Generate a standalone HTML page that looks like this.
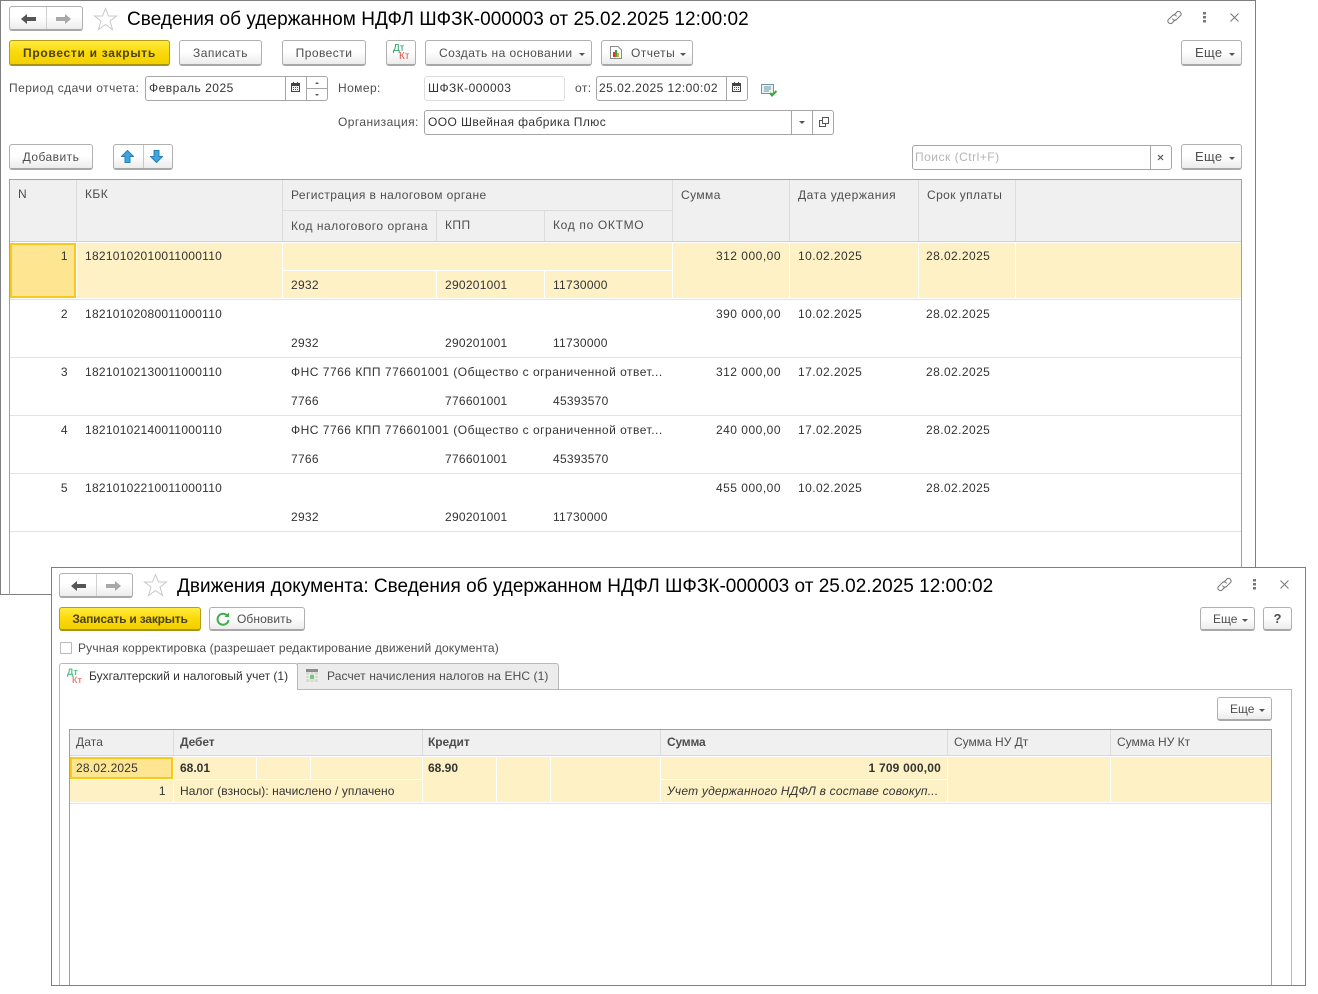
<!DOCTYPE html>
<html lang="ru">
<head>
<meta charset="utf-8">
<style>
html,body{margin:0;padding:0;background:#fff}
#root{position:relative;width:1318px;height:994px;overflow:hidden;background:#fff;font-family:"Liberation Sans",Arial,sans-serif;font-size:12px;color:#333}
#root div,#root svg{position:absolute}
.t{white-space:nowrap;line-height:14px;letter-spacing:.42px;color:#333}
.n{letter-spacing:.27px}
.d{letter-spacing:.42px}
.m{letter-spacing:.5px}
.b{white-space:nowrap;line-height:14px;color:#333;letter-spacing:0}
.r{text-align:right}
.l{color:#4d4d4d}
.win{background:#fff;border:1px solid #7f7f7f;box-sizing:border-box}
.btn{box-sizing:border-box;border:1px solid #b0b0b0;border-bottom:2px solid #a8a8a8;border-radius:3px;background:linear-gradient(#fff,#fff 45%,#ececec);line-height:22px;text-align:center;color:#4d4d4d;letter-spacing:.45px;white-space:nowrap}
.y{border:1px solid #b39b1c;border-bottom:2px solid #a89218;background:linear-gradient(#ffec3f,#fbd90a 50%,#f2d000);color:#4a4218;font-weight:bold}
.fld{box-sizing:border-box;border:1px solid #a6a6a6;border-radius:3px;background:#fff}
.title{font-size:19px;line-height:22px;color:#000;white-space:nowrap;letter-spacing:.05px}
.h{background:#f0f0f0}
.s{background:#fdf1c5}
.line{background:#e3e3e3}
.tri{width:0;height:0;border-left:3px solid transparent;border-right:3px solid transparent;border-top:3px solid #555}
.dk{font-size:10px;line-height:10px;letter-spacing:0;white-space:nowrap}
</style>
</head>
<body>
<div id="root">

<!-- TOP WINDOW -->
<div class="win" style="left:0;top:0;width:1256px;height:595px"></div>

<div class="btn" style="left:9px;top:6px;width:74px;height:25px"></div>
<div style="left:46px;top:7px;width:1px;height:22px;background:#d0d0d0"></div>
<svg style="left:21px;top:13px" width="15" height="12" viewBox="0 0 15 12"><path d="M0 6 6 1V4H15V8H6V11Z" fill="#555"/></svg>
<svg style="left:56px;top:13px" width="15" height="12" viewBox="0 0 15 12"><path d="M15 6 9 1V4H0V8H9V11Z" fill="#a8a8a8"/></svg>
<svg style="left:93px;top:7px" width="25" height="24" viewBox="0 0 25 24"><path d="M12.500 1.500 15.500 9H23.500L17 14 19.500 22.500 12.500 17.500 5.500 22.500 8 14 1.500 9H9.500Z" fill="#fff" stroke="#c8c8c8"/></svg>
<div class="title" style="left:127px;top:9px">Сведения об удержанном НДФЛ ШФЗК-000003 от 25.02.2025 12:00:02</div>
<svg style="left:1166px;top:9px" width="17" height="17" viewBox="0 0 17 17" fill="none" stroke="#777"><path d="M7.500 6.500 11.500 2.500A2.800 2.800 0 0 1 15 6L10 11A2.500 2.500 0 0 1 6.500 9.500"/><path d="M9.500 10.500 5.500 14.500A2.800 2.800 0 0 1 2 11L7 6A2.500 2.500 0 0 1 10.500 7.500"/></svg>
<svg style="left:1202px;top:11px" width="5" height="13" viewBox="0 0 5 13" fill="#777"><rect x="1" y="1" width="3" height="2.500"/><rect x="1" y="5" width="3" height="2.500"/><rect x="1" y="9" width="3" height="2.500"/></svg>
<svg style="left:1230px;top:13px" width="9" height="9" viewBox="0 0 9 9" stroke="#777"><path d="M.5.5 8.500 8.500M8.500.5.500 8.500"/></svg>

<div class="btn y" style="left:9px;top:40px;width:161px;height:26px;line-height:24px;letter-spacing:.7px">Провести и закрыть</div>
<div class="btn" style="left:179px;top:40px;width:83px;height:26px;line-height:24px">Записать</div>
<div class="btn" style="left:282px;top:40px;width:84px;height:26px;line-height:24px">Провести</div>
<div class="btn" style="left:386px;top:40px;width:30px;height:26px"></div>
<div class="dk" style="left:393px;top:44px;color:#1f9a5a">Дт</div>
<div class="dk" style="left:399px;top:52px;color:#e0504a">Кт</div>
<div class="btn" style="left:425px;top:40px;width:167px;height:26px;line-height:24px;text-align:left;padding-left:13px">Создать на основании</div>
<div class="tri" style="left:579px;top:53px"></div>
<div class="btn" style="left:601px;top:40px;width:92px;height:26px;line-height:24px;text-align:left;padding-left:29px">Отчеты</div>
<svg style="left:610px;top:46px" width="12" height="13" viewBox="0 0 12 13"><path d="M.5.500H8L11.500 4V12.500H.5Z" fill="#fff" stroke="#8a8a8a"/><rect x="3" y="6" width="2" height="5" fill="#d33"/><rect x="5" y="4" width="2" height="7" fill="#3a3"/><rect x="7" y="7" width="2" height="4" fill="#da3"/></svg>
<div class="tri" style="left:680px;top:53px"></div>
<div class="btn" style="left:1181px;top:40px;width:61px;height:26px;line-height:24px;text-align:left;padding-left:13px;font-size:13px;letter-spacing:.3px">Еще</div>
<div class="tri" style="left:1229px;top:53px"></div>

<div class="t l" style="left:9px;top:81px;letter-spacing:.47px">Период сдачи отчета:</div>
<div class="fld" style="left:145px;top:76px;width:183px;height:25px"></div>
<div style="left:285px;top:77px;width:1px;height:23px;background:#a6a6a6"></div>
<div style="left:306px;top:77px;width:1px;height:23px;background:#a6a6a6"></div>
<div style="left:307px;top:88px;width:20px;height:1px;background:#a6a6a6"></div>
<div class="t" style="left:149px;top:81px;letter-spacing:.5px">Февраль 2025</div>
<svg style="left:291px;top:82px" width="9" height="10" viewBox="0 0 9 10"><path d="M0 1H2V0H3V1H6V0H7V1H9V10H0Z" fill="#444"/><rect x="1" y="4" width="7" height="5" fill="#f2f2f2"/><path d="M2 5.500H7M2 7.500H7" stroke="#555" stroke-dasharray="1 1"/></svg>
<div class="tri" style="left:315px;top:82px;border-top:0;border-bottom:2px solid #555;border-left-width:2px;border-right-width:2px"></div>
<div class="tri" style="left:315px;top:94px;border-top:2px solid #555;border-left-width:2px;border-right-width:2px"></div>

<div class="t l" style="left:338px;top:81px">Номер:</div>
<div class="fld" style="left:424px;top:76px;width:141px;height:25px;border-color:#ddd"></div>
<div class="t" style="left:428px;top:81px;letter-spacing:.45px">ШФЗК-000003</div>
<div class="t l" style="left:575px;top:81px">от:</div>
<div class="fld" style="left:596px;top:76px;width:152px;height:25px"></div>
<div style="left:726px;top:77px;width:1px;height:23px;background:#a6a6a6"></div>
<div class="t" style="left:599px;top:81px;letter-spacing:.47px">25.02.2025 12:00:02</div>
<svg style="left:732px;top:82px" width="9" height="10" viewBox="0 0 9 10"><path d="M0 1H2V0H3V1H6V0H7V1H9V10H0Z" fill="#444"/><rect x="1" y="4" width="7" height="5" fill="#f2f2f2"/><path d="M2 5.500H7M2 7.500H7" stroke="#555" stroke-dasharray="1 1"/></svg>
<svg style="left:761px;top:84px" width="17" height="13" viewBox="0 0 17 13"><path d="M.5.500H12.500V9.500H.5Z" fill="#e8f0f2" stroke="#6d98a6"/><path d="M3 3H10M3 5H10M3 7H8" stroke="#6d98a6"/><path d="M9 9 11 11.500 15.500 7" fill="none" stroke="#3aa83a" stroke-width="2"/></svg>

<div class="t l" style="left:338px;top:115px">Организация:</div>
<div class="fld" style="left:424px;top:110px;width:410px;height:25px"></div>
<div style="left:791px;top:111px;width:1px;height:23px;background:#a6a6a6"></div>
<div style="left:812px;top:111px;width:1px;height:23px;background:#a6a6a6"></div>
<div class="t" style="left:428px;top:115px">ООО Швейная фабрика Плюс</div>
<div class="tri" style="left:799px;top:121px"></div>
<svg style="left:819px;top:117px" width="10" height="10" viewBox="0 0 10 10" fill="#fff" stroke="#555"><rect x="3.500" y=".5" width="6" height="6"/><path d="M3 3.500H.5V9.500H6.500V7" fill="none"/></svg>

<div class="btn" style="left:9px;top:144px;width:84px;height:26px;line-height:24px">Добавить</div>
<div class="btn" style="left:113px;top:144px;width:60px;height:26px"></div>
<div style="left:143px;top:145px;width:1px;height:23px;background:#c8c8c8"></div>
<svg style="left:121px;top:150px" width="13" height="13" viewBox="0 0 13 13"><path d="M6.500.5 12.500 6.500H9V12.500H4V6.500H.5Z" fill="#3fa5e0" stroke="#2a7fb5"/></svg>
<svg style="left:150px;top:150px" width="13" height="13" viewBox="0 0 13 13"><path d="M6.500 12.500 12.500 6.500H9V.5H4V6.500H.5Z" fill="#3fa5e0" stroke="#2a7fb5"/></svg>
<div class="fld" style="left:912px;top:145px;width:260px;height:25px"></div>
<div style="left:1150px;top:146px;width:1px;height:23px;background:#a6a6a6"></div>
<div class="t" style="left:915px;top:150px;color:#b5b5b5;letter-spacing:.5px">Поиск (Ctrl+F)</div>
<svg style="left:1157px;top:154px" width="7" height="7" viewBox="0 0 7 7" stroke="#555" stroke-width="1.200"><path d="M1 1 6 6M6 1 1 6"/></svg>
<div class="btn" style="left:1181px;top:144px;width:61px;height:26px;line-height:24px;text-align:left;padding-left:13px;font-size:13px;letter-spacing:.3px">Еще</div>
<div class="tri" style="left:1229px;top:157px"></div>

<!-- TOP TABLE -->
<div style="left:9px;top:179px;width:1233px;height:1px;background:#a0a0a0"></div>
<div style="left:9px;top:179px;width:1px;height:416px;background:#a0a0a0"></div>
<div style="left:1241px;top:179px;width:1px;height:416px;background:#a0a0a0"></div>
<div class="h" style="left:10px;top:180px;width:1231px;height:61px"></div>
<div style="left:10px;top:241px;width:1231px;height:1px;background:#d0d0d0"></div>
<div style="left:283px;top:210px;width:389px;height:1px;background:#dcdcdc"></div>
<div style="left:76px;top:180px;width:1px;height:61px;background:#dcdcdc"></div>
<div style="left:282px;top:180px;width:1px;height:61px;background:#dcdcdc"></div>
<div style="left:672px;top:180px;width:1px;height:61px;background:#dcdcdc"></div>
<div style="left:789px;top:180px;width:1px;height:61px;background:#dcdcdc"></div>
<div style="left:918px;top:180px;width:1px;height:61px;background:#dcdcdc"></div>
<div style="left:1015px;top:180px;width:1px;height:61px;background:#dcdcdc"></div>
<div style="left:436px;top:211px;width:1px;height:30px;background:#dcdcdc"></div>
<div style="left:544px;top:211px;width:1px;height:30px;background:#dcdcdc"></div>
<div class="t l" style="left:18px;top:187px">N</div>
<div class="t l" style="left:85px;top:187px">КБК</div>
<div class="t l" style="left:291px;top:188px">Регистрация в налоговом органе</div>
<div class="t l" style="left:291px;top:219px;letter-spacing:.52px">Код налогового органа</div>
<div class="t l" style="left:445px;top:218px">КПП</div>
<div class="t l" style="left:553px;top:218px;letter-spacing:.67px">Код по ОКТМО</div>
<div class="t l" style="left:681px;top:188px">Сумма</div>
<div class="t l" style="left:798px;top:188px;letter-spacing:.56px">Дата удержания</div>
<div class="t l" style="left:927px;top:188px">Срок уплаты</div>

<!-- selected row -->
<div class="s" style="left:10px;top:243px;width:1231px;height:55px"></div>
<div style="left:76px;top:243px;width:1px;height:55px;background:#fff"></div>
<div style="left:282px;top:243px;width:1px;height:55px;background:#fff"></div>
<div style="left:672px;top:243px;width:1px;height:55px;background:#fff"></div>
<div style="left:789px;top:243px;width:1px;height:55px;background:#fff"></div>
<div style="left:918px;top:243px;width:1px;height:55px;background:#fff"></div>
<div style="left:1015px;top:243px;width:1px;height:55px;background:#fff"></div>
<div style="left:283px;top:270px;width:389px;height:1px;background:#fff"></div>
<div style="left:436px;top:271px;width:1px;height:27px;background:#fff"></div>
<div style="left:544px;top:271px;width:1px;height:27px;background:#fff"></div>
<div style="left:10px;top:243px;width:66px;height:55px;box-sizing:border-box;border:2px solid #f8c91c;background:#fee591"></div>
<div style="left:10px;top:299px;width:1231px;height:1px;background:#e3e3e3"></div>
<div class="line" style="left:10px;top:357px;width:1231px;height:1px"></div>
<div class="line" style="left:10px;top:415px;width:1231px;height:1px"></div>
<div class="line" style="left:10px;top:473px;width:1231px;height:1px"></div>
<div class="line" style="left:10px;top:531px;width:1231px;height:1px"></div>

<div class="t r" style="left:30px;width:38px;top:249px">1</div>
<div class="t n" style="left:85px;top:249px">18210102010011000110</div>
<div class="t r m" style="left:690px;width:91px;top:249px">312 000,00</div>
<div class="t d" style="left:798px;top:249px">10.02.2025</div>
<div class="t d" style="left:926px;top:249px">28.02.2025</div>
<div class="t n" style="left:291px;top:278px">2932</div>
<div class="t n" style="left:445px;top:278px">290201001</div>
<div class="t n" style="left:553px;top:278px">11730000</div>

<div class="t r" style="left:30px;width:38px;top:307px">2</div>
<div class="t n" style="left:85px;top:307px">18210102080011000110</div>
<div class="t r m" style="left:690px;width:91px;top:307px">390 000,00</div>
<div class="t d" style="left:798px;top:307px">10.02.2025</div>
<div class="t d" style="left:926px;top:307px">28.02.2025</div>
<div class="t n" style="left:291px;top:336px">2932</div>
<div class="t n" style="left:445px;top:336px">290201001</div>
<div class="t n" style="left:553px;top:336px">11730000</div>

<div class="t r" style="left:30px;width:38px;top:365px">3</div>
<div class="t n" style="left:85px;top:365px">18210102130011000110</div>
<div class="t" style="left:291px;top:365px;letter-spacing:.5px;width:375px;overflow:hidden">ФНС 7766 КПП 776601001 (Общество с ограниченной ответ...</div>
<div class="t r m" style="left:690px;width:91px;top:365px">312 000,00</div>
<div class="t d" style="left:798px;top:365px">17.02.2025</div>
<div class="t d" style="left:926px;top:365px">28.02.2025</div>
<div class="t n" style="left:291px;top:394px">7766</div>
<div class="t n" style="left:445px;top:394px">776601001</div>
<div class="t n" style="left:553px;top:394px">45393570</div>

<div class="t r" style="left:30px;width:38px;top:423px">4</div>
<div class="t n" style="left:85px;top:423px">18210102140011000110</div>
<div class="t" style="left:291px;top:423px;letter-spacing:.5px;width:375px;overflow:hidden">ФНС 7766 КПП 776601001 (Общество с ограниченной ответ...</div>
<div class="t r m" style="left:690px;width:91px;top:423px">240 000,00</div>
<div class="t d" style="left:798px;top:423px">17.02.2025</div>
<div class="t d" style="left:926px;top:423px">28.02.2025</div>
<div class="t n" style="left:291px;top:452px">7766</div>
<div class="t n" style="left:445px;top:452px">776601001</div>
<div class="t n" style="left:553px;top:452px">45393570</div>

<div class="t r" style="left:30px;width:38px;top:481px">5</div>
<div class="t n" style="left:85px;top:481px">18210102210011000110</div>
<div class="t r m" style="left:690px;width:91px;top:481px">455 000,00</div>
<div class="t d" style="left:798px;top:481px">10.02.2025</div>
<div class="t d" style="left:926px;top:481px">28.02.2025</div>
<div class="t n" style="left:291px;top:510px">2932</div>
<div class="t n" style="left:445px;top:510px">290201001</div>
<div class="t n" style="left:553px;top:510px">11730000</div>

<!-- BOTTOM WINDOW -->
<div class="win" style="left:51px;top:567px;width:1255px;height:419px"></div>
<div class="btn" style="left:59px;top:573px;width:74px;height:25px"></div>
<div style="left:96px;top:574px;width:1px;height:22px;background:#d0d0d0"></div>
<svg style="left:71px;top:580px" width="15" height="12" viewBox="0 0 15 12"><path d="M0 6 6 1V4H15V8H6V11Z" fill="#555"/></svg>
<svg style="left:106px;top:580px" width="15" height="12" viewBox="0 0 15 12"><path d="M15 6 9 1V4H0V8H9V11Z" fill="#a8a8a8"/></svg>
<svg style="left:143px;top:573px" width="25" height="24" viewBox="0 0 25 24"><path d="M12.500 1.500 15.500 9H23.500L17 14 19.500 22.500 12.500 17.500 5.500 22.500 8 14 1.500 9H9.500Z" fill="#fff" stroke="#c8c8c8"/></svg>
<div class="title" style="left:177px;top:576px;letter-spacing:.01px">Движения документа: Сведения об удержанном НДФЛ ШФЗК-000003 от 25.02.2025 12:00:02</div>
<svg style="left:1216px;top:576px" width="17" height="17" viewBox="0 0 17 17" fill="none" stroke="#777"><path d="M7.500 6.500 11.500 2.500A2.800 2.800 0 0 1 15 6L10 11A2.500 2.500 0 0 1 6.500 9.500"/><path d="M9.500 10.500 5.500 14.500A2.800 2.800 0 0 1 2 11L7 6A2.500 2.500 0 0 1 10.500 7.500"/></svg>
<svg style="left:1252px;top:578px" width="5" height="13" viewBox="0 0 5 13" fill="#777"><rect x="1" y="1" width="3" height="2.500"/><rect x="1" y="5" width="3" height="2.500"/><rect x="1" y="9" width="3" height="2.500"/></svg>
<svg style="left:1280px;top:580px" width="9" height="9" viewBox="0 0 9 9" stroke="#777"><path d="M.5.5 8.500 8.500M8.500.5.500 8.500"/></svg>

<div class="btn y" style="left:59px;top:607px;width:142px;height:24px;letter-spacing:-.2px;line-height:22px">Записать и закрыть</div>
<div class="btn" style="left:209px;top:607px;width:96px;height:24px;text-align:left;padding-left:27px;letter-spacing:.1px">Обновить</div>
<svg style="left:216px;top:612px" width="14" height="14" viewBox="0 0 14 14" fill="none"><path d="M11.500 4A5.500 5.500 0 1 0 12.500 8" stroke="#3fae49" stroke-width="2"/><path d="M8.500 5H13V.5Z" fill="#3fae49"/></svg>
<div class="btn" style="left:1200px;top:607px;width:55px;height:24px;text-align:left;padding-left:12px;letter-spacing:0">Еще</div>
<div class="tri" style="left:1242px;top:619px"></div>
<div class="btn" style="left:1263px;top:607px;width:29px;height:24px;font-weight:bold;font-size:13px;letter-spacing:0">?</div>

<div class="fld" style="left:60px;top:642px;width:12px;height:12px;border-radius:1px;border-color:#b8b8b8"></div>
<div class="t l" style="left:78px;top:641px;letter-spacing:.16px">Ручная корректировка (разрешает редактирование движений документа)</div>

<!-- tabs -->
<div style="left:297px;top:689px;width:995px;height:1px;background:#b8b8b8"></div>
<div style="left:1291px;top:689px;width:1px;height:296px;background:#b8b8b8"></div>
<div style="left:59px;top:689px;width:1px;height:296px;background:#b8b8b8"></div>
<div style="left:297px;top:663px;width:262px;height:26px;box-sizing:border-box;border:1px solid #b8b8b8;border-bottom:0;border-radius:0 3px 0 0;background:#ececec"></div>
<div style="left:59px;top:663px;width:239px;height:27px;box-sizing:border-box;border:1px solid #b8b8b8;border-bottom:0;border-right:1px solid #b8b8b8;border-radius:3px 3px 0 0;background:#fff"></div>
<div class="dk" style="left:67px;top:667px;color:#57c08a;font-size:9px;font-weight:bold">Дт</div>
<div class="dk" style="left:72px;top:675px;color:#f08080;font-size:9px;font-weight:bold">Кт</div>
<div class="t" style="left:89px;top:669px;letter-spacing:0">Бухгалтерский и налоговый учет (1)</div>
<svg style="left:306px;top:669px" width="12" height="13" viewBox="0 0 12 13"><rect width="12" height="13" fill="#d4dcd0"/><rect width="12" height="3" fill="#8c8c8c"/><path d="M0 6.500H12M0 9.500H12M4 3V13M8 3V13" stroke="#f0f0f0"/><rect x="4" y="6" width="4" height="4" fill="#7cc47c"/></svg>
<div class="t l" style="left:327px;top:669px;letter-spacing:.1px">Расчет начисления налогов на ЕНС (1)</div>

<div class="btn" style="left:1217px;top:697px;width:55px;height:24px;text-align:left;padding-left:12px;letter-spacing:0">Еще</div>
<div class="tri" style="left:1259px;top:709px"></div>

<!-- BOTTOM TABLE -->
<div style="left:69px;top:729px;width:1203px;height:1px;background:#a0a0a0"></div>
<div style="left:69px;top:729px;width:1px;height:256px;background:#a0a0a0"></div>
<div style="left:1271px;top:729px;width:1px;height:256px;background:#a0a0a0"></div>
<div class="h" style="left:70px;top:730px;width:1201px;height:25px"></div>
<div style="left:70px;top:755px;width:1201px;height:1px;background:#d8d8d8"></div>
<div style="left:173px;top:730px;width:1px;height:25px;background:#dcdcdc"></div>
<div style="left:422px;top:730px;width:1px;height:25px;background:#dcdcdc"></div>
<div style="left:660px;top:730px;width:1px;height:25px;background:#dcdcdc"></div>
<div style="left:947px;top:730px;width:1px;height:25px;background:#dcdcdc"></div>
<div style="left:1110px;top:730px;width:1px;height:25px;background:#dcdcdc"></div>
<div class="t l" style="left:76px;top:735px;letter-spacing:.1px">Дата</div>
<div class="b l" style="left:180px;top:735px;font-weight:bold;letter-spacing:-.1px">Дебет</div>
<div class="b l" style="left:428px;top:735px;font-weight:bold;letter-spacing:-.1px">Кредит</div>
<div class="b l" style="left:667px;top:735px;font-weight:bold;letter-spacing:-.2px">Сумма</div>
<div class="t l" style="left:954px;top:735px;letter-spacing:0">Сумма НУ Дт</div>
<div class="t l" style="left:1117px;top:735px;letter-spacing:0">Сумма НУ Кт</div>

<div class="s" style="left:70px;top:757px;width:1201px;height:45px"></div>
<div style="left:173px;top:757px;width:1px;height:45px;background:#fff"></div>
<div style="left:422px;top:757px;width:1px;height:45px;background:#fff"></div>
<div style="left:660px;top:757px;width:1px;height:45px;background:#fff"></div>
<div style="left:947px;top:757px;width:1px;height:45px;background:#fff"></div>
<div style="left:1110px;top:757px;width:1px;height:45px;background:#fff"></div>
<div style="left:256px;top:757px;width:1px;height:22px;background:#fff"></div>
<div style="left:310px;top:757px;width:1px;height:22px;background:#fff"></div>
<div style="left:496px;top:757px;width:1px;height:45px;background:#fff"></div>
<div style="left:550px;top:757px;width:1px;height:45px;background:#fff"></div>
<div style="left:70px;top:779px;width:352px;height:1px;background:#fff"></div>
<div style="left:661px;top:779px;width:286px;height:1px;background:#fff"></div>
<div style="left:70px;top:757px;width:103px;height:22px;box-sizing:border-box;border:2px solid #f8c91c;background:#fee591"></div>
<div style="left:70px;top:803px;width:1201px;height:1px;background:#e3e3e3"></div>

<div class="t" style="left:76px;top:761px;letter-spacing:.2px">28.02.2025</div>
<div class="b" style="left:180px;top:761px;font-weight:bold">68.01</div>
<div class="b" style="left:428px;top:761px;font-weight:bold">68.90</div>
<div class="b r" style="left:760px;width:181px;top:761px;font-weight:bold;letter-spacing:.2px">1 709 000,00</div>
<div class="t r" style="left:130px;width:36px;top:784px">1</div>
<div class="t" style="left:180px;top:784px;letter-spacing:.06px">Налог (взносы): начислено / уплачено</div>
<div class="t" style="left:667px;top:784px;font-style:italic;letter-spacing:.22px">Учет удержанного НДФЛ в составе совокуп...</div>

</div>
</body>
</html>
